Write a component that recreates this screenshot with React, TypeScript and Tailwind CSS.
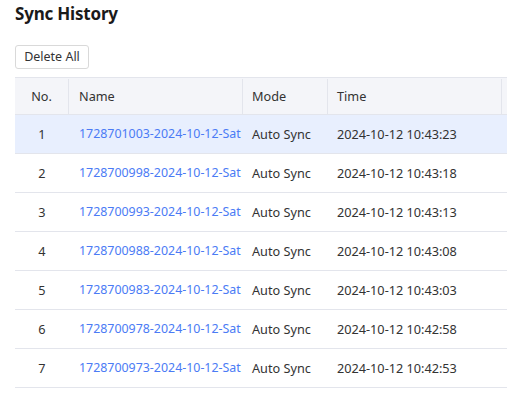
const rows = [
  { no: 1, name: "1728701003-2024-10-12-Sat", time: "2024-10-12 10:43:23" },
  { no: 2, name: "1728700998-2024-10-12-Sat", time: "2024-10-12 10:43:18" },
  { no: 3, name: "1728700993-2024-10-12-Sat", time: "2024-10-12 10:43:13" },
  { no: 4, name: "1728700988-2024-10-12-Sat", time: "2024-10-12 10:43:08" },
  { no: 5, name: "1728700983-2024-10-12-Sat", time: "2024-10-12 10:43:03" },
  { no: 6, name: "1728700978-2024-10-12-Sat", time: "2024-10-12 10:42:58" },
  { no: 7, name: "1728700973-2024-10-12-Sat", time: "2024-10-12 10:42:53" },
];

function App() {
  return (
    <div
      className="min-h-screen w-[507px] overflow-hidden bg-white text-[#333]"
      style={{ fontFamily: '"Noto Sans", "Open Sans", sans-serif' }}
    >
      <div className="pl-[15px] pt-[1px]">
        {/* Header */}
        <h1 className="text-[17px] font-bold leading-[26px] tracking-[-0.2px] text-[#1a1a1a]">Sync History</h1>

        <button className="mt-[18px] h-[24px] w-[74px] rounded-[3px] border border-[#d9d9d9] bg-white text-[12.5px] leading-none text-[#333]">
          Delete All
        </button>

        {/* Table */}
        <div className="mt-[8px] w-[600px] text-[12.7px]">
          <div className="flex h-[38px] items-center border-y border-[#e3e5ec] bg-[#f4f5f9] pt-[1px]">
            <div className="flex h-full w-[54px] items-center justify-center border-r border-[#e3e5ec]">No.</div>
            <div className="flex h-full w-[174px] items-center border-r border-[#e3e5ec] pl-[10px]">Name</div>
            <div className="flex h-full w-[85px] items-center border-r border-[#e3e5ec] pl-[9px]">Mode</div>
            <div className="flex h-full w-[174px] items-center border-r border-[#e3e5ec] pl-[9px]">Time</div>
            <div className="flex-1" />
          </div>

          {rows.map((r) => (
            <div
              key={r.no}
              className={
                r.no === 1
                  ? "flex h-[39px] items-center border-b border-[#e3e5ec] bg-[#e8effe] pt-[1px]"
                  : "flex h-[39px] items-center border-b border-[#e3e5ec] pt-[1px]"
              }
            >
              <div className="w-[54px] text-center">{r.no}</div>
              <div className="w-[174px] whitespace-nowrap pl-[10px] text-[12.4px] text-[#4b7bf5]">{r.name}</div>
              <div className="w-[85px] pl-[9px]">Auto Sync</div>
              <div className="w-[174px] pl-[9px]">{r.time}</div>
              <div className="flex-1" />
            </div>
          ))}
        </div>
      </div>
    </div>
  );
}

export default App;
